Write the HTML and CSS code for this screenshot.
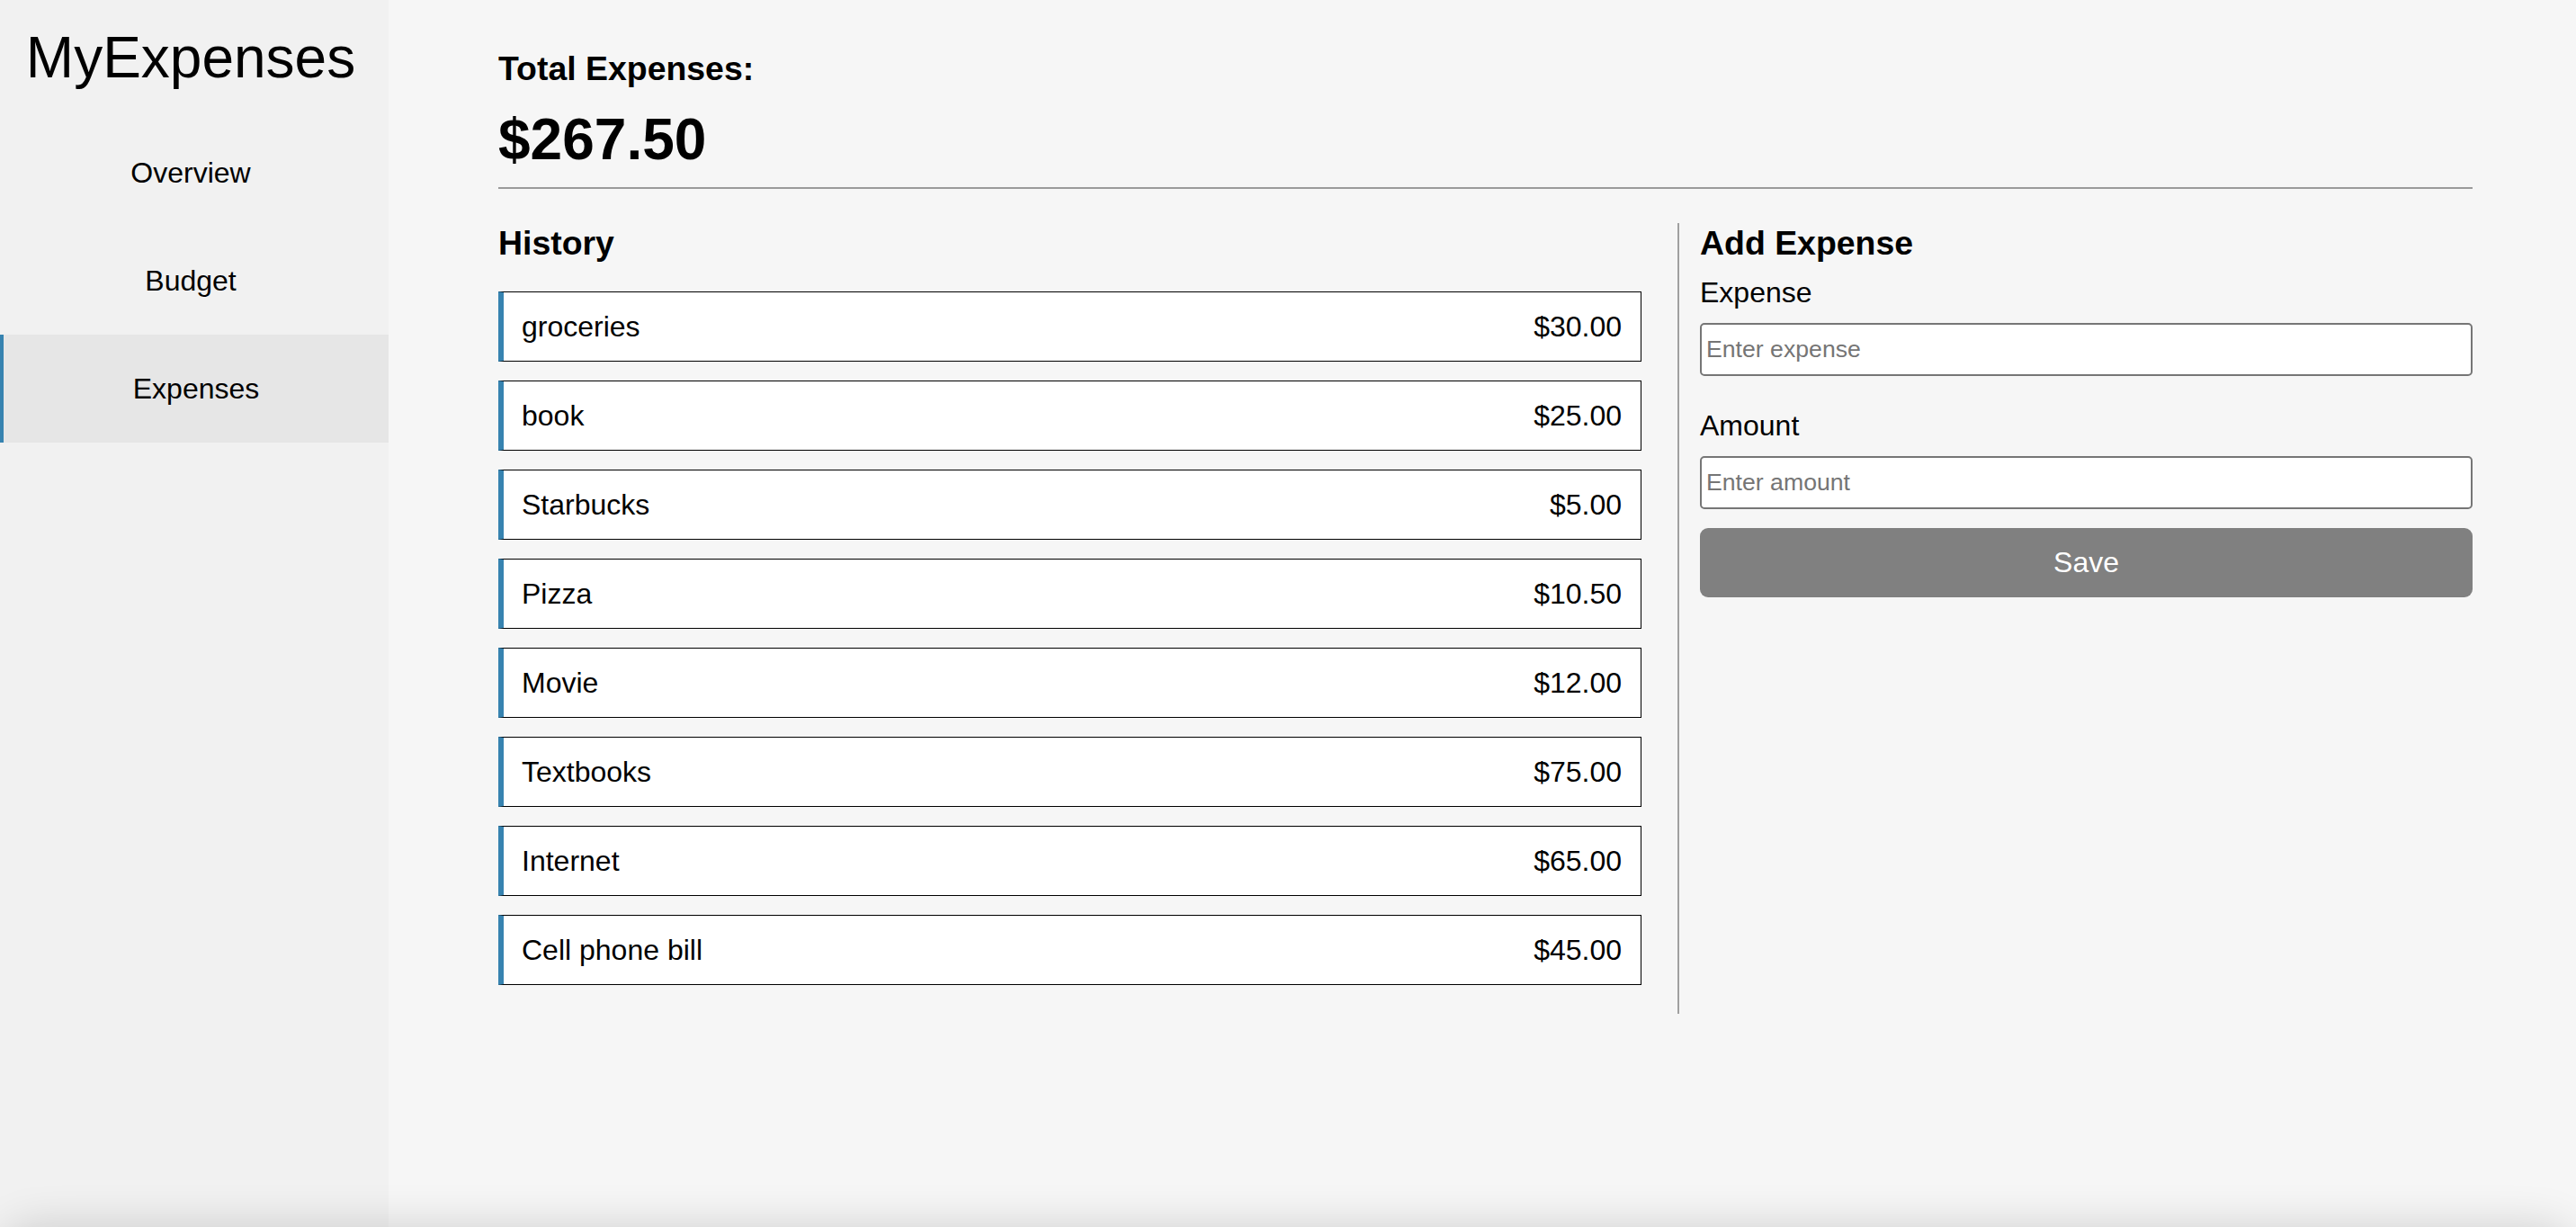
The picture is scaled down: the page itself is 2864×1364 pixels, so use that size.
FILE: index.html
```html
<!DOCTYPE html>
<html lang="en">
<head>
<meta charset="utf-8">
<title>MyExpenses</title>
<link rel="stylesheet" href="styles.css">
</head>
<body>
<aside class="sidebar">
  <div class="logo">MyExpenses</div>
  <nav class="nav">
    <a class="nav-item">Overview</a>
    <a class="nav-item">Budget</a>
    <a class="nav-item active">Expenses</a>
  </nav>
</aside>
<main class="main">
  <section class="summary">
    <h3 class="summary-label">Total Expenses:</h3>
    <h1 class="summary-total">$267.50</h1>
  </section>
  <div class="columns">
    <section class="history">
      <h3 class="section-title">History</h3>
      <ul class="items">
        <li class="item"><span>groceries</span><span>$30.00</span></li>
        <li class="item"><span>book</span><span>$25.00</span></li>
        <li class="item"><span>Starbucks</span><span>$5.00</span></li>
        <li class="item"><span>Pizza</span><span>$10.50</span></li>
        <li class="item"><span>Movie</span><span>$12.00</span></li>
        <li class="item"><span>Textbooks</span><span>$75.00</span></li>
        <li class="item"><span>Internet</span><span>$65.00</span></li>
        <li class="item"><span>Cell phone bill</span><span>$45.00</span></li>
      </ul>
    </section>
    <section class="add">
      <h3 class="section-title">Add Expense</h3>
      <form class="form">
        <label class="label" for="exp">Expense</label>
        <input class="input" id="exp" type="text" placeholder="Enter expense">
        <label class="label label-gap" for="amt">Amount</label>
        <input class="input" id="amt" type="text" placeholder="Enter amount">
        <button class="save" type="button">Save</button>
      </form>
    </section>
  </div>
</main>
<div class="bottom-shadow"></div>
</body>
</html>
```

FILE: styles.css
```css
* { box-sizing: border-box; }

html, body {
  margin: 0;
  padding: 0;
  height: 100%;
}

body {
  display: flex;
  min-height: 100vh;
  font-family: "Liberation Sans", Arial, sans-serif;
  color: #000;
  background: #f6f6f6;
  overflow: hidden;
}

.sidebar {
  width: 432px;
  flex: 0 0 432px;
  background: #f1f1f1;
}

.logo {
  font-size: 64px;
  line-height: 128px;
  height: 132px;
  text-align: center;
  padding-right: 8px;
}

.nav {
  display: flex;
  flex-direction: column;
}

.nav-item {
  height: 120px;
  display: flex;
  align-items: center;
  justify-content: center;
  font-size: 32px;
  color: #000;
  text-decoration: none;
  padding-right: 8px;
}

.nav-item.active {
  background: #e6e6e6;
  border-left: 4px solid #3783b0;
  padding-right: 0;
}

.main {
  flex: 1;
  background: #f6f6f6;
  padding: 54px 115px 0 122px;
}

.summary {
  border-bottom: 2px solid #9b9b9b;
  padding-bottom: 16px;
}

.summary-label {
  margin: 0;
  font-size: 37.44px;
  line-height: 44px;
  font-weight: bold;
}

.summary-total {
  margin: 20px 0 0;
  font-size: 64px;
  line-height: 74px;
  font-weight: bold;
}

.columns {
  display: flex;
  margin-top: 38px;
}

.history {
  width: 1313px;
  flex: 0 0 1313px;
  padding-right: 40px;
  padding-bottom: 32px;
  border-right: 2px solid #a0a0a0;
}

.section-title {
  margin: 0;
  font-size: 37.44px;
  line-height: 44px;
  font-weight: bold;
}

.items {
  list-style: none;
  margin: 32px 0 0;
  padding: 0;
  display: flex;
  flex-direction: column;
  gap: 21px;
}

.item {
  height: 78px;
  display: flex;
  align-items: center;
  justify-content: space-between;
  background: #fff;
  border: 1px solid #000;
  border-left: 6px solid #3783b0;
  padding: 0 21px 0 20px;
  font-size: 32px;
}

.add {
  flex: 1;
  padding-left: 23px;
}

.form {
  display: flex;
  flex-direction: column;
  margin-top: 15px;
}

.label {
  font-size: 32px;
  line-height: 37px;
}

.label-gap {
  margin-top: 37px;
}

.input {
  margin-top: 15px;
  height: 59px;
  width: 100%;
  border: 2px solid #767676;
  border-radius: 5px;
  background: #fff;
  padding: 0 5px;
  font-family: "Liberation Sans", Arial, sans-serif;
  font-size: 26.67px;
  color: #000;
}

.input::placeholder {
  color: #757575;
}

.save {
  margin-top: 21px;
  height: 77px;
  width: 100%;
  border: none;
  border-radius: 9px;
  background: #808080;
  color: #fff;
  font-family: "Liberation Sans", Arial, sans-serif;
  font-size: 32px;
}

.bottom-shadow {
  position: fixed;
  left: 0;
  right: 0;
  top: 100%;
  height: 100px;
  border-radius: 40px;
  box-shadow: 0 0 50px rgba(0, 0, 0, 0.16);
}
```
